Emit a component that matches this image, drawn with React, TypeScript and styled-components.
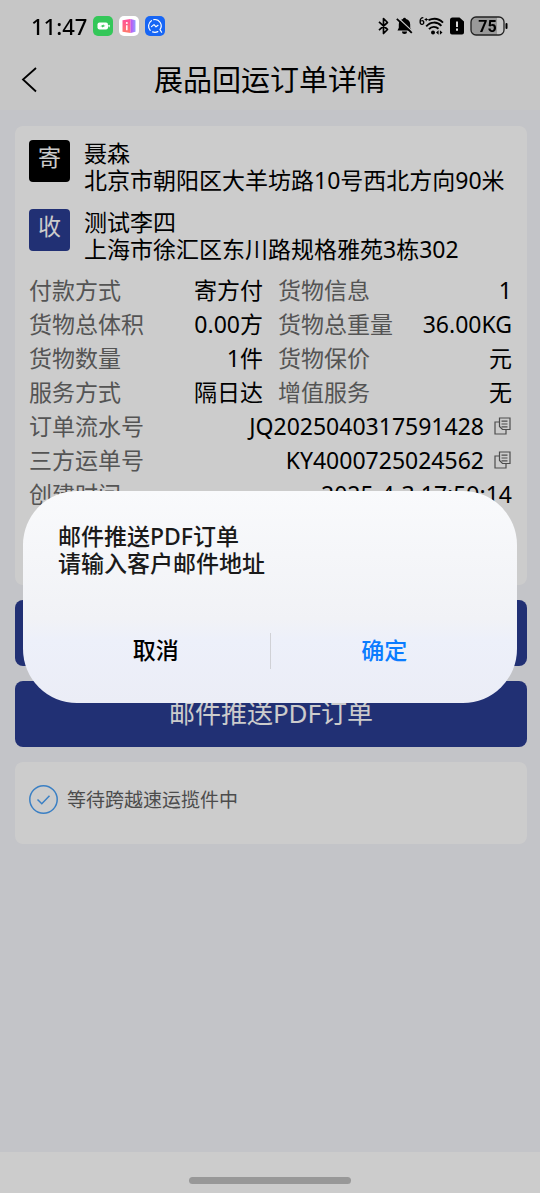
import React from "react";
import styled, { createGlobalStyle } from "styled-components";

const GlobalStyle = createGlobalStyle`
  *, *::before, *::after { box-sizing: border-box; }
  body {
    margin: 0;
    background: #f4f5fa;
    color: #000;
    font-family: "Noto Sans", "Noto Sans CJK SC", sans-serif;
    font-size: 23px;
    line-height: 27px;
  }
  button {
    margin: 0;
    padding: 0;
    border: 0;
    background: none;
    color: inherit;
    font: inherit;
    cursor: pointer;
  }
  h1, h2, p, dl, dt, dd, ul, li { margin: 0; padding: 0; font: inherit; list-style: none; }
  svg { display: block; flex: none; }
`;

const Page = styled.div`
  display: flex;
  flex-direction: column;
  min-height: 100vh;
`;

const Header = styled.header`
  background: #f8f8f8;
`;

const StatusBar = styled.div`
  position: relative;
  z-index: 2;
  display: flex;
  align-items: center;
  justify-content: space-between;
  height: 52px;
  padding: 0 32px 0 31px;
`;

const StatusGroup = styled.div`
  display: flex;
  align-items: center;
  gap: 6px;
`;

const Clock = styled.time`
  font-size: 22px;
  font-weight: 500;
`;

const NavBar = styled.div`
  display: grid;
  grid-template-columns: 60px 1fr 60px;
  align-items: center;
  height: 58px;
  padding-bottom: 2px;
`;

const BackButton = styled.button`
  display: flex;
  align-items: center;
  height: 44px;
  padding-left: 20px;
`;

const Title = styled.h1`
  font-size: 29px;
  line-height: 36px;
  text-align: center;
`;

const Content = styled.main`
  display: flex;
  flex: 1;
  flex-direction: column;
  gap: 15px;
  padding: 16px 13px 15px 15px;
`;

const Card = styled.section`
  padding: 14px;
  border-radius: 8px;
  background: #fff;
`;

const OrderCard = styled(Card)`
  min-height: 459px;
  padding-right: 15px;
`;

const AddressList = styled.ul`
  display: flex;
  flex-direction: column;
  gap: 15px;
  margin-bottom: 10px;
`;

const Address = styled.li`
  display: flex;
  gap: 14px;
`;

const Tag = styled.span<{ $color: string }>`
  flex: none;
  width: 41px;
  height: 42px;
  border-radius: 4px;
  background: ${(p) => p.$color};
  color: #fff;
  line-height: 34px;
  text-align: center;
`;

const Details = styled.dl`
  display: grid;
  grid-template-columns: 1fr 1fr;
  column-gap: 15px;
`;

const Detail = styled.div<{ $wide?: boolean }>`
  display: flex;
  align-items: center;
  justify-content: space-between;
  grid-column: ${(p) => (p.$wide ? "1 / -1" : "auto")};
  height: 34px;
  white-space: nowrap;
`;

const Label = styled.dt`
  color: #6a6a6a;
`;

const Value = styled.dd`
  display: flex;
  align-items: center;
  gap: 10px;
`;

const CopyButton = styled.button`
  padding-right: 1px;
`;

const ActionButton = styled.button`
  height: 66px;
  padding-bottom: 2px;
  border-radius: 8px;
  background: #2a3c92;
  color: #fff;
  font-size: 26px;
`;

const ProgressCard = styled(Card)`
  display: flex;
  align-items: flex-start;
  gap: 9px;
  height: 82px;
  padding-top: 23px;
`;

const ProgressText = styled.p`
  color: #606060;
  font-size: 19px;
  line-height: 30px;
`;

const HomeBar = styled.footer`
  display: flex;
  justify-content: center;
  height: 41px;
  padding-top: 25px;
  background: #fff;
`;

const HomeIndicator = styled.div`
  width: 30%;
  height: 7px;
  border-radius: 4px;
  background: #bebebe;
`;

const Scrim = styled.div`
  position: fixed;
  inset: 0;
  z-index: 1;
  display: flex;
  align-items: center;
  padding: 0 23px;
  background: rgba(0, 0, 0, 0.2);
`;

const Dialog = styled.div`
  flex: 1;
  padding: 32px 19px 34px;
  border-radius: 54px;
  background: linear-gradient(#f9fafc, #f1f2f6 60%, #edf0fa 70%, #ebedf6);
`;

const DialogText = styled.div`
  padding: 0 16px;
  margin-bottom: 56px;
  color: #1a1a1a;
  font-weight: 500;
`;

const DialogActions = styled.div`
  display: flex;
  align-items: center;
`;

const DialogButton = styled.button<{ $color: string }>`
  flex: 1;
  height: 36px;
  color: ${(p) => p.$color};
  font-weight: 500;

  & + & {
    border-left: 1px solid #d0d1d6;
  }
`;

const CopyIcon = () => (
  <svg width="17" height="18" viewBox="0 0 17 18" fill="none" stroke="#606060" strokeWidth="1.2">
    <path d="M5.500 1h10.500v11.500H8.500L5.500 9.500z" />
    <path d="M5.500 5H1v12h11v-4.500" />
    <path d="M7.500 4.200h6M7.500 7h6M7.500 9.800h6" />
  </svg>
);

const BatteryAppIcon = () => (
  <svg width="20" height="20" viewBox="0 0 20 20">
    <rect width="20" height="20" rx="5" fill="#34c759" />
    <rect x="4.5" y="6.5" width="10.5" height="7" rx="2" fill="#fff" />
    <rect x="15.5" y="8.7" width="1.2" height="2.6" rx=".6" fill="#fff" />
    <path d="M7.3 10.2 10.7 8.4v1.2l1.8.1-3.4 1.9v-1.2z" fill="#34c759" />
  </svg>
);

const InfoAppIcon = () => (
  <svg width="20" height="20" viewBox="0 0 20 20">
    <defs>
      <linearGradient id="pink" x1="0" y1="0" x2="0" y2="1">
        <stop offset="0" stopColor="#ff4f9a" />
        <stop offset="1" stopColor="#ff7a6b" />
      </linearGradient>
      <linearGradient id="violet" x1="0" y1="0" x2="1" y2="0">
        <stop offset="0" stopColor="#c44cf0" />
        <stop offset="1" stopColor="#8fa0ff" />
      </linearGradient>
    </defs>
    <rect width="20" height="20" rx="5" fill="#fff" />
    <path d="M3.5 4.2 11.5 3v14l-8-1.2z" fill="url(#pink)" />
    <path d="M11.5 3l5 1.2v11.6l-5 1.2z" fill="url(#violet)" />
    <path d="M7.8 9.2v5" stroke="#fff" strokeWidth="1.5" />
    <circle cx="7.8" cy="6.9" r="1" fill="#fff" />
  </svg>
);

const SearchAppIcon = () => (
  <svg width="20" height="20" viewBox="0 0 20 20" fill="none" stroke="#fff" strokeWidth="1.2" strokeLinecap="round" strokeLinejoin="round">
    <rect width="20" height="20" rx="5" fill="#1766f5" stroke="none" />
    <path d="M5.200 14.300a6.400 6.400 0 0 1 1.200-9.600M8.800 3.600a6.400 6.400 0 0 1 6.200 10l1.600 2.600M12.800 15.600a6.400 6.400 0 0 1-5.200.3" />
    <path d="M6.500 10.600 9 8.600l2 2.200 2-1.500" />
  </svg>
);

const BluetoothIcon = () => (
  <svg width="12" height="18" viewBox="0 0 12 18" fill="none" stroke="#000" strokeWidth="1.700" strokeLinejoin="round">
    <path d="M1 4.800l8.500 7.700-4 4V1.500l4 4L1 13.200" />
  </svg>
);

const MutedBellIcon = () => (
  <svg width="17" height="18" viewBox="0 0 17 18">
    <path d="M8.500.8a1.500 1.500 0 0 1 1.500 1.200c2.800.7 4.200 2.800 4.200 5.500v3.300l1.300 2.700H1.500l1.300-2.700V7.500c0-2.700 1.400-4.800 4.200-5.500A1.500 1.500 0 0 1 8.500.800zM6 14.500h5a2.500 2.500 0 0 1-5 0z" />
    <path d="M2 .800l15 14" stroke="#c6c6c6" strokeWidth="1.300" />
    <path d="M.800 1.800l15 14" stroke="#000" strokeWidth="1.800" />
  </svg>
);

const WifiIcon = () => (
  <svg width="25" height="18" viewBox="0 0 25 18" fill="none" stroke="#000">
    <text x="0" y="8" fill="#000" stroke="none" fontSize="10" fontWeight="700" fontFamily="Roboto, sans-serif">6</text>
    <path d="M5.600 2.500h3.200M7.200 1v3.200" strokeWidth="1" />
    <path d="M9.500 3.200c5-2.400 10.500-1.600 14.500 2.400M7.200 9.400c4.200-5 11-5 15.200-.600M10 12.200c2.600-3 6.800-3 9.500-.400" strokeWidth="1.900" />
    <circle cx="14" cy="15.500" r="2" fill="#000" stroke="none" />
    <path d="M17 15.500l2.600-2.300v4.600zM23.500 15.500l-2.600-2.300v4.600z" fill="#000" stroke="none" />
  </svg>
);

const SimAlertIcon = () => (
  <svg width="14" height="18" viewBox="0 0 14 18">
    <path d="M2.500.500H9.500L14 4.500v11a2 2 0 0 1-2 2H2a2 2 0 0 1-2-2V3A2.500 2.500 0 0 1 2.500.500z" />
    <path d="M7 4.500v5.500M7 11.500v2.300" stroke="#d8d8d8" strokeWidth="2" />
  </svg>
);

const BatteryIcon = () => (
  <svg width="38" height="20" viewBox="0 0 38 20">
    <rect x="1" y="1" width="33" height="18" rx="5" fill="#c6c6c6" />
    <path d="M6 1h21v18H6a5 5 0 0 1-5-5V6a5 5 0 0 1 5-5z" fill="#999" />
    <rect x="1" y="1" width="33" height="18" rx="5" fill="none" stroke="#222" strokeWidth="1.300" />
    <rect x="35.500" y="7" width="2" height="6" rx="1" />
    <text x="17.500" y="15.500" textAnchor="middle" fontSize="16" fontWeight="700" fontFamily="Roboto, sans-serif">75</text>
  </svg>
);

const BackIcon = () => (
  <svg width="18" height="26" viewBox="0 0 18 26" fill="none" stroke="#000" strokeWidth="1.800">
    <path d="M16 1 3 12.500l13 12" />
  </svg>
);

const CheckIcon = () => (
  <svg width="29" height="29" viewBox="0 0 29 29" fill="none" stroke="#4aa0f5" strokeWidth="1.500">
    <circle cx="14.500" cy="14.500" r="13.700" />
    <path d="M8.500 14.500l4.300 4.300 7.700-8" />
  </svg>
);

type Item = { label: string; value: string; wide?: boolean; copy?: boolean };

const addresses = [
  { tag: "寄", color: "#000", name: "聂森", place: "北京市朝阳区大羊坊路10号西北方向90米" },
  { tag: "收", color: "#2a3c92", name: "测试李四", place: "上海市徐汇区东川路规格雅苑3栋302" },
];

const details: Item[] = [
  { label: "付款方式", value: "寄方付" },
  { label: "货物信息", value: "1" },
  { label: "货物总体积", value: "0.00方" },
  { label: "货物总重量", value: "36.00KG" },
  { label: "货物数量", value: "1件" },
  { label: "货物保价", value: "元" },
  { label: "服务方式", value: "隔日达" },
  { label: "增值服务", value: "无" },
  { label: "订单流水号", value: "JQ2025040317591428", wide: true, copy: true },
  { label: "三方运单号", value: "KY4000725024562", wide: true, copy: true },
  { label: "创建时间", value: "2025-4-3 17:59:14", wide: true },
];

export default function App() {
  return (
    <>
      <GlobalStyle />
      <Page>
        <Header>
          <StatusBar>
            <StatusGroup>
              <Clock>11:47</Clock>
              <BatteryAppIcon />
              <InfoAppIcon />
              <SearchAppIcon />
            </StatusGroup>
            <StatusGroup>
              <BluetoothIcon />
              <MutedBellIcon />
              <WifiIcon />
              <SimAlertIcon />
              <BatteryIcon />
            </StatusGroup>
          </StatusBar>
          <NavBar>
            <BackButton aria-label="返回">
              <BackIcon />
            </BackButton>
            <Title>展品回运订单详情</Title>
          </NavBar>
        </Header>

        <Content>
          <OrderCard>
            <AddressList>
              {addresses.map((a) => (
                <Address key={a.tag}>
                  <Tag $color={a.color}>{a.tag}</Tag>
                  <div>
                    <p>{a.name}</p>
                    <p>{a.place}</p>
                  </div>
                </Address>
              ))}
            </AddressList>
            <Details>
              {details.map((d) => (
                <Detail key={d.label} $wide={d.wide}>
                  <Label>{d.label}</Label>
                  <Value>
                    {d.value}
                    {d.copy && (
                      <CopyButton aria-label={`复制${d.label}`}>
                        <CopyIcon />
                      </CopyButton>
                    )}
                  </Value>
                </Detail>
              ))}
            </Details>
          </OrderCard>
          <ActionButton aria-label="订单操作" />
          <ActionButton>邮件推送PDF订单</ActionButton>
          <ProgressCard>
            <CheckIcon />
            <ProgressText>等待跨越速运揽件中</ProgressText>
          </ProgressCard>
        </Content>

        <HomeBar>
          <HomeIndicator />
        </HomeBar>
      </Page>

      <Scrim>
        <Dialog role="dialog" aria-modal="true" aria-labelledby="dialog-title">
          <DialogText>
            <h2 id="dialog-title">邮件推送PDF订单</h2>
            <p>请输入客户邮件地址</p>
          </DialogText>
          <DialogActions>
            <DialogButton $color="#000">取消</DialogButton>
            <DialogButton $color="#0a7cff">确定</DialogButton>
          </DialogActions>
        </Dialog>
      </Scrim>
    </>
  );
}
